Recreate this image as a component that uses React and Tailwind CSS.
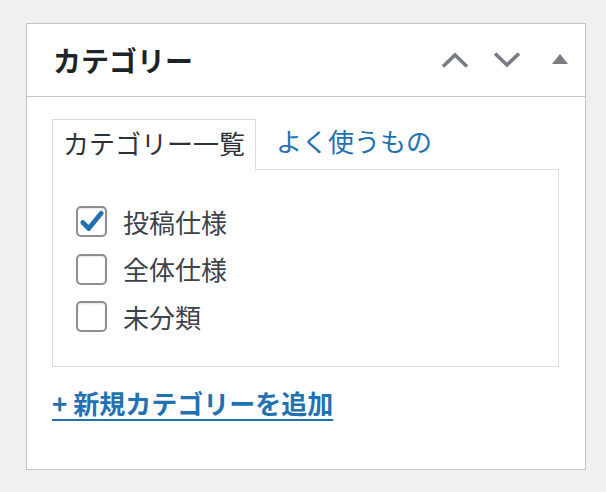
const font = { fontFamily: '"Noto Sans CJK JP", "Noto Sans", sans-serif' };

const Chevron = ({ up }) => (
  <svg width="28" height="16" viewBox="0 0 28 16" fill="none">
    <path
      d={up ? "M2 14.5 L14 3 L26 14.5" : "M2 1.5 L14 13 L26 1.5"}
      stroke="#787c82"
      strokeWidth="3.6"
      strokeLinejoin="miter"
    />
  </svg>
);

const Checkbox = ({ checked, label }) => (
  <label className="flex items-center h-[47.5px]">
    <span className="w-[31px] h-[31px] rounded-[5px] border-2 border-[#8c8f94] bg-white shadow-[inset_0_1px_2px_rgba(0,0,0,0.1)] flex items-center justify-center">
      {checked && (
        <svg width="26" height="26" viewBox="0 0 24 24">
          <path d="M3.5 12.5 L9 18 L20.5 4" stroke="#2271b1" strokeWidth="4.4" fill="none" strokeLinejoin="round" strokeLinecap="round" />
        </svg>
      )}
    </span>
    <span className="ml-[16px] text-[26px] leading-none text-[#3c434a]">{label}</span>
  </label>
);

export default function App() {
  return (
    <div className="w-[606px] h-[492px] bg-[#f0f0f1] pt-[23px] pl-[26px]" style={font}>
      <div className="w-[560px] h-[447px] bg-white border-[1.5px] border-[#c3c4c7]">
        <div className="h-[73px] border-b-[1.5px] border-[#c3c4c7] flex items-center pl-[26px] pr-[17px]">
          <h2 className="text-[28px] font-bold text-[#1d2327] leading-none flex-1">カテゴリー</h2>
          <div className="flex items-center">
            <Chevron up />
            <span className="w-[24px]" />
            <Chevron />
            <span className="w-[31px]" />
            <svg width="16" height="10" viewBox="0 0 16 10" className="-mt-[3px]">
              <path d="M0 10 L8 0 L16 10 Z" fill="#787c82" />
            </svg>
          </div>
        </div>
        <div className="pt-[20px] pl-[25px] pr-[25px]">
          <div className="flex items-end">
            <div className="relative z-10 -mb-[1.5px] h-[52px] px-[10px] pb-[5px] border-[1.5px] border-b-0 border-[#dcdcde] bg-white flex items-center text-[26px] text-[#2c3338] leading-none">
              カテゴリー一覧
            </div>
            <a className="ml-[20px] h-[52px] pb-[5px] flex items-center text-[26px] text-[#2271b1] leading-none">よく使うもの</a>
          </div>
          <div className="w-[507px] h-[198px] border-[1.5px] border-[#dcdcde] pt-[28px] pl-[23px]">
            <Checkbox checked label="投稿仕様" />
            <Checkbox label="全体仕様" />
            <Checkbox label="未分類" />
          </div>
          <div className="mt-[23px]">
            <a className="text-[26px] font-bold text-[#2271b1] underline underline-offset-[5px] decoration-2 leading-none">
              + 新規カテゴリーを追加
            </a>
          </div>
        </div>
      </div>
    </div>
  );
}
